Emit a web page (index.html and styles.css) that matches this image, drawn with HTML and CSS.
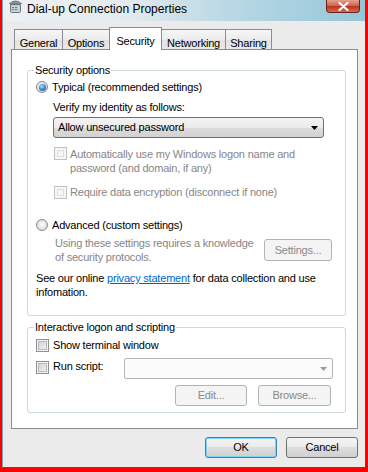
FILE: index.html
```html
<!DOCTYPE html>
<html>
<head>
<meta charset="utf-8">
<title>Dial-up Connection Properties</title>
<link rel="stylesheet" href="styles.css">
</head>
<body>
<div class="frame">
  <div class="window">
    <div class="titlebar">
      <svg class="appicon" width="13" height="13" viewBox="0 0 13 13">
        <rect x="1.5" y="4.5" width="10" height="8" rx="1" fill="#c9ced3" stroke="#6f7880"/>
        <rect x="3" y="7" width="2" height="1" fill="#6f7880"/>
        <rect x="6" y="7" width="2" height="1" fill="#6f7880"/>
        <rect x="3" y="9" width="2" height="1" fill="#6f7880"/>
        <rect x="6" y="9" width="2" height="1" fill="#6f7880"/>
        <path d="M0.5 3.5 Q6.5 -1.5 12.5 3.5 L11 5 L9 4 L4 4 L2 5 Z" fill="#8a939b" stroke="#5c656d" stroke-width="0.8"/>
      </svg>
      <span class="title">Dial-up Connection Properties</span>
      <div class="close">
        <svg width="11" height="9" viewBox="0 0 11 9">
          <path d="M1.5 1 L9.5 8 M9.5 1 L1.5 8" stroke="#ffffff" stroke-width="2.2" stroke-linecap="round"/>
        </svg>
      </div>
    </div>
    <div class="face">
      <div class="tabs">
        <div class="tab t-general">General</div>
        <div class="tab t-options">Options</div>
        <div class="tab t-security active">Security</div>
        <div class="tab t-networking">Networking</div>
        <div class="tab t-sharing">Sharing</div>
      </div>
      <div class="panel">
        <fieldset class="group g-security">
          <legend>Security options</legend>
          <div class="opt r-typical"><span class="radio on"></span><span>Typical (recommended settings)</span></div>
          <div class="indent">
            <div class="verify">Verify my identity as follows:</div>
            <div class="combo"><span>Allow unsecured password</span>
              <svg class="combo-arrow" width="7" height="4" viewBox="0 0 7 4"><path d="M0 0 H7 L3.5 4 Z" fill="#000"/></svg>
            </div>
            <div class="chk-row r-auto disabled"><span class="check dis"></span><span>Automatically use my Windows logon name and<br>password (and domain, if any)</span></div>
            <div class="chk-row r-encrypt disabled"><span class="check dis"></span><span>Require data encryption (disconnect if none)</span></div>
          </div>
          <div class="opt r-advanced"><span class="radio"></span><span>Advanced (custom settings)</span></div>
          <div class="adv-row">
            <span class="disabled">Using these settings requires a knowledge<br>of security protocols.</span>
            <button class="btn dis settings">Settings...</button>
          </div>
          <p class="privacy">See our online <a class="link" href="#">privacy statement</a> for data collection and use<br>infomation.</p>
        </fieldset>
        <fieldset class="group g-script">
          <legend>Interactive logon and scripting</legend>
          <div class="opt r-terminal"><span class="check"></span><span>Show terminal window</span></div>
          <div class="run-row">
            <span class="check"></span>
            <span class="run-label">Run script:</span>
            <div class="script-input">
              <svg width="7" height="4" viewBox="0 0 7 4"><path d="M0 0 H7 L3.5 4 Z" fill="#9a9a9a"/></svg>
            </div>
          </div>
          <div class="script-buttons">
            <button class="btn dis edit">Edit...</button>
            <button class="btn dis browse">Browse...</button>
          </div>
        </fieldset>
      </div>
      <div class="buttons">
        <button class="btn ok">OK</button>
        <button class="btn">Cancel</button>
      </div>
    </div>
  </div>
</div>
</body>
</html>
```
FILE: styles.css
```css
* { box-sizing: border-box; }
html, body { margin: 0; padding: 0; }
body {
  font-family: "Liberation Sans", Arial, sans-serif;
  font-size: 11px;
  line-height: 14px;
  letter-spacing: -0.2px;
  color: #000;
  background: #fff;
}
.frame {
  width: 368px;
  height: 472px;
  border-left: 2px solid #ff0000;
  border-right: 3px solid #ff0000;
  border-bottom: 4px solid #ff0000;
}
.window {
  height: 468px;
  display: flex;
  flex-direction: column;
  border-left: 1px solid #7fa3bb;
  border-bottom: 1px solid #3b5873;
  background: #ebebeb;
}
.titlebar {
  height: 21px;
  flex: none;
  display: flex;
  align-items: flex-start;
  background: linear-gradient(90deg, #eef1f3 0%, #e3eaee 35%, #b9d8e4 62%, #95c7da 100%);
}
.appicon { margin-left: 6px; flex: none; }
.title {
  margin-left: 5px;
  font-size: 12px;
  letter-spacing: 0;
  line-height: 16px;
  padding-top: 1px;
  white-space: nowrap;
}
.close {
  margin-left: auto;
  margin-right: 5px;
  width: 34px;
  height: 13px;
  border: 1px solid #6b2218;
  border-top: 0;
  border-radius: 0 0 4px 4px;
  background: linear-gradient(#e7a090, #d0604c 50%, #b8321e 50%, #d46c50);
  display: flex;
  align-items: center;
  justify-content: center;
  flex: none;
}
.face {
  flex: 1;
  padding: 6px 7px 0 8px;
  display: flex;
  flex-direction: column;
}
.tabs {
  display: flex;
  align-items: flex-end;
  height: 22px;
  padding-left: 3px;
  flex: none;
}
.tab {
  height: 20px;
  border: 1px solid #898c95;
  border-bottom: 0;
  padding-top: 6px;
  text-align: center;
  background: linear-gradient(#f6f6f6, #ececec 50%, #e2e2e2 50%, #e9e9e9);
  margin-right: -1px;
  white-space: nowrap;
  flex: none;
}
.t-general { width: 49px; }
.t-options { width: 48px; }
.t-security { width: 53px; }
.t-networking { width: 65px; }
.t-sharing { width: 47px; }
.tab.active {
  height: 23px;
  margin-bottom: -1px;
  background: #fff;
  position: relative;
  z-index: 1;
}
.panel {
  height: 380px;
  flex: none;
  border: 1px solid #898c95;
  background: #fff;
  padding: 13px 11px 0 15px;
}
.group {
  margin: 0;
  padding: 0;
  border: 1px solid #cdd7de;
  border-radius: 3px;
  min-width: 0;
}
.group legend {
  padding: 0 1px;
  margin-left: 6px;
  line-height: 14px;
}
.g-security { padding-bottom: 16px; }
.g-script { margin-top: 4px; padding-bottom: 6px; }
.opt {
  display: flex;
  align-items: center;
  height: 14px;
  padding-left: 8px;
}
.r-typical { margin-top: 3px; }
.r-advanced { margin-top: 19px; }
.r-terminal { margin-top: 4px; }
.radio {
  width: 12px;
  height: 12px;
  border-radius: 50%;
  border: 1px solid #8a8c8e;
  background: radial-gradient(circle at 50% 45%, #ffffff 0%, #e9e9e9 45%, #c9c9c9 100%);
  margin-right: 4px;
  flex: none;
  display: flex;
  align-items: center;
  justify-content: center;
}
.radio.on::after {
  content: "";
  width: 7px;
  height: 7px;
  border-radius: 50%;
  background: radial-gradient(circle at 40% 35%, #b4e6ff 0%, #3d8fd6 45%, #124f96 100%);
}
.indent { padding-left: 25px; }
.verify { margin-top: 6px; }
.combo {
  margin-top: 3px;
  width: 271px;
  height: 21px;
  border: 1px solid #707070;
  border-radius: 3px;
  background: linear-gradient(#f4f4f4, #ebebeb 50%, #dddddd 50%, #d2d2d2);
  display: flex;
  align-items: center;
  justify-content: space-between;
  padding: 0 4px 0 4px;
  line-height: 19px;
}
.combo-arrow { margin-right: 1px; }
.chk-row {
  display: flex;
  align-items: flex-start;
  margin-top: 9px;
}
.r-encrypt { margin-top: 10px; align-items: center; }
.check {
  width: 13px;
  height: 13px;
  border: 1px solid #8f8f8f;
  background: linear-gradient(135deg, #c7ccd2, #f7f7f7);
  box-shadow: inset 0 0 0 1px #f4f4f4, inset 0 0 0 2px #b4bac0;
  flex: none;
  margin-right: 4px;
}
.check.dis {
  border-color: #c2c2c2;
  background: #f6f6f6;
  box-shadow: inset 0 0 0 2px #f6f6f6, inset 0 0 0 3px #dedede;
  margin-left: 1px;
  margin-right: 3px;
}
.disabled { color: #868686; }
.adv-row {
  display: flex;
  justify-content: space-between;
  align-items: flex-start;
  margin-top: 4px;
  padding-left: 27px;
  padding-right: 13px;
}
.btn {
  font-family: "Liberation Sans", Arial, sans-serif;
  font-size: 11px;
  letter-spacing: -0.2px;
  line-height: 19px;
  height: 21px;
  width: 72px;
  padding: 0;
  margin: 0;
  color: #000;
  border: 1px solid #707070;
  border-radius: 3px;
  background: linear-gradient(#f4f4f4, #ebebeb 50%, #dddddd 50%, #d0d0d0);
  text-align: center;
  flex: none;
}
.btn.dis {
  color: #8a8a8a;
  border-color: #afb4b7;
  background: #f4f4f4;
}
.btn.ok {
  border-color: #3c7fb1;
  box-shadow: inset 0 0 0 1px #7fd4f5;
}
.settings { width: 68px; height: 22px; margin-top: 3px; }
.privacy {
  margin: 7px 0 0 0;
  padding-left: 8px;
}
.link { color: #0066cc; text-decoration: underline; }
.run-row {
  display: flex;
  align-items: flex-start;
  margin-top: 6px;
  height: 21px;
  padding-left: 8px;
}
.run-row .check { margin-top: 3px; }
.run-label { width: 71px; margin-top: 1px; flex: none; }
.script-input {
  width: 209px;
  height: 21px;
  border: 1px solid #b2b7ba;
  border-radius: 2px;
  background: #fbfbfb;
  display: flex;
  align-items: center;
  justify-content: flex-end;
  padding-right: 5px;
  flex: none;
}
.script-buttons {
  display: flex;
  justify-content: flex-end;
  gap: 11px;
  margin-top: 6px;
  padding-right: 14px;
}
.browse { width: 73px; }
.buttons {
  display: flex;
  justify-content: flex-end;
  gap: 9px;
  margin-top: 8px;
}
```
